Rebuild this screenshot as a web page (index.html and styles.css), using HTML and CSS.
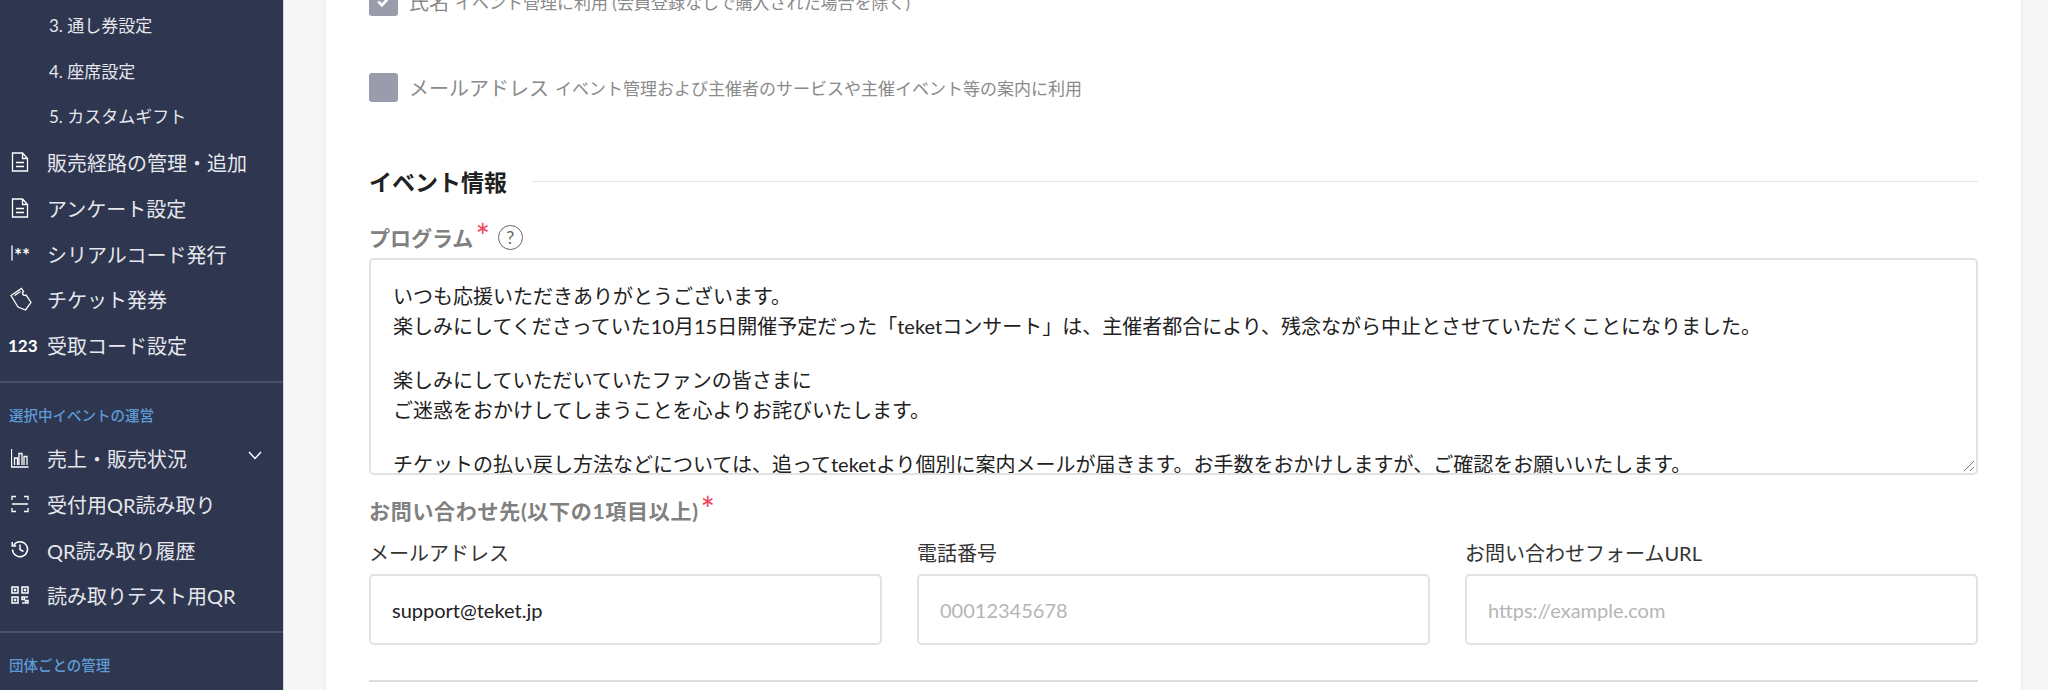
FILE: index.html
```html
<!DOCTYPE html>
<html lang="ja">
<head>
    <meta charset="UTF-8">
    <title>イベント編集</title>
    <link rel="stylesheet" href="styles.css">
</head>
<body>
    <div class="layout">
        <nav class="sidebar">
            <ul class="subnav">
                <li>3. 通し券設定</li>
                <li>4. 座席設定</li>
                <li>5. カスタムギフト</li>
            </ul>
            <ul class="nav">
                <li>
                    <svg class="icon" viewBox="0 0 18 20"><path d="M1.500 1h10l5 5.500V19h-15zM11.500 1v5.500h5M5 10.500h8M5 14.500h8"/></svg>
                    販売経路の管理・追加
                </li>
                <li>
                    <svg class="icon" viewBox="0 0 18 20"><path d="M1.500 1h10l5 5.500V19h-15zM11.500 1v5.500h5M5 10.500h8M5 14.500h8"/></svg>
                    アンケート設定
                </li>
                <li>
                    <svg class="icon" viewBox="0 0 18 20"><path d="M1 2.500v15"/></svg>
                    <span class="icon-text serial">**</span>
                    シリアルコード発行
                </li>
                <li>
                    <svg class="icon ticket" viewBox="0 0 22 24"><path d="M1 8.500L11.500 1.500l2 3a2 2 0 0 0 2.500 3.500l5 7.500-5.500 7.500L8 20z" transform="translate(0 0)"/><path d="M4.500 8.500l6-4"/></svg>
                    チケット発券
                </li>
                <li>
                    <span class="icon-text">123</span>
                    受取コード設定
                </li>
            </ul>
            <div class="nav-section">
                <h4>選択中イベントの運営</h4>
                <ul class="nav">
                    <li>
                        <svg class="icon" viewBox="0 0 18 20"><path d="M.5 1v18h17M3.500 17V10h3v7M8 17V5.500h3V17M13 17V8.500h3V17"/></svg>
                        売上・販売状況
                        <svg class="chevron" viewBox="0 0 14 9"><path d="M1 1l6 6.500L13 1"/></svg>
                    </li>
                    <li>
                        <svg class="icon" viewBox="0 0 18 18"><path d="M1 5V1.500h4M13 1.500h4V5M1 13v3.500h4M13 16.500h4V13M1 9h16"/></svg>
                        受付用QR読み取り
                    </li>
                    <li>
                        <svg class="icon" viewBox="0 0 18 18"><path d="M2.800 5A7.500 7.500 0 1 1 1.500 9.500M1.200 2v4h4M9 4.500v5l3.500 2" stroke-width="1.500"/></svg>
                        QR読み取り履歴
                    </li>
                    <li>
                        <svg class="icon" viewBox="0 0 18 18"><path d="M1 1h6v6H1zM11 1h6v6h-6zM1 11h6v6H1zM3.500 3.500h1v1h-1zM13.500 3.500h1v1h-1zM3.500 13.500h1v1h-1zM11 11h2.500v2.500H11zM14.500 14.500H17V17h-2.500zM14.500 11H17M11 17h2.500" stroke-width="1.500"/></svg>
                        読み取りテスト用QR
                    </li>
                </ul>
            </div>
            <div class="nav-section">
                <h4>団体ごとの管理</h4>
            </div>
        </nav>

        <main class="content">
            <div class="card">
                <div class="check-row first">
                    <span class="checkbox"><svg viewBox="0 0 16 16"><path d="M3 8l3.500 3.500L13 4.500"/></svg></span>
                    <span class="check-name">氏名</span>
                    <span class="check-note">イベント管理に利用 (会員登録なしで購入された場合を除く)</span>
                </div>
                <div class="check-row">
                    <span class="checkbox"></span>
                    <span class="check-name">メールアドレス</span>
                    <span class="check-note">イベント管理および主催者のサービスや主催イベント等の案内に利用</span>
                </div>

                <div class="section-title">
                    <h3>イベント情報</h3>
                    <span class="section-line"></span>
                </div>

                <div class="field-label">
                    プログラム<span class="required">*</span>
                    <span class="help">?</span>
                </div>
                <div class="textarea">
                    <p>いつも応援いただきありがとうございます。<br>楽しみにしてくださっていた10月15日開催予定だった「teketコンサート」は、主催者都合により、残念ながら中止とさせていただくことになりました。</p>
                    <p>楽しみにしていただいていたファンの皆さまに<br>ご迷惑をおかけしてしまうことを心よりお詫びいたします。</p>
                    <p>チケットの払い戻し方法などについては、追ってteketより個別に案内メールが届きます。お手数をおかけしますが、ご確認をお願いいたします。</p>
                    <svg class="resize" viewBox="0 0 12 12"><path d="M1 11L11 1M7 11l4-4"/></svg>
                </div>

                <div class="field-label contact">
                    お問い合わせ先(以下の1項目以上)<span class="required">*</span>
                </div>
                <div class="contact-grid">
                    <label class="contact-item">
                        <span>メールアドレス</span>
                        <input type="text" value="support@teket.jp">
                    </label>
                    <label class="contact-item">
                        <span>電話番号</span>
                        <input type="text" placeholder="00012345678">
                    </label>
                    <label class="contact-item">
                        <span>お問い合わせフォームURL</span>
                        <input type="text" placeholder="https://example.com">
                    </label>
                </div>
                <hr class="bottom-rule">
            </div>
        </main>
    </div>
</body>
</html>
```

FILE: styles.css
```css
* {
    box-sizing: border-box;
}
html, body {
    margin: 0;
    height: 690px;
    overflow: hidden;
}
body {
    background-color: #f7f7f8;
    font-family: Lato, "Noto Sans CJK JP", sans-serif;
    color: #212121;
}
ul {
    list-style: none;
    margin: 0;
    padding: 0;
}
.layout {
    display: flex;
    height: 690px;
}

/* sidebar */
.sidebar {
    width: 284px;
    flex-shrink: 0;
    height: 690px;
    overflow: hidden;
    background-color: #2e3650;
    border-right: 1px solid #d8d8dc;
    color: #e6e7ec;
}
.subnav {
    padding-top: 3px;
}
.subnav li {
    height: 45.7px;
    line-height: 45.7px;
    padding-left: 49px;
    font-size: 17px;
}
.nav li {
    display: flex;
    align-items: center;
    position: relative;
    height: 45.7px;
    font-size: 20px;
    padding-left: 47px;
}
.icon {
    position: absolute;
    left: 11px;
    top: 12px;
    width: 18px;
    height: 20px;
    fill: none;
    stroke: #fff;
    stroke-width: 1.3;
}
.icon.ticket {
    left: 10px;
    top: 10px;
    width: 22px;
    height: 24px;
}
.icon-text {
    position: absolute;
    left: 8px;
    font-size: 17px;
    font-weight: 700;
    color: #fff;
}
.serial {
    left: 14px;
    font-size: 19px;
    line-height: 20px;
    top: 14px;
}
.chevron {
    position: absolute;
    left: 248px;
    top: 15px;
    width: 14px;
    height: 9px;
    fill: none;
    stroke: #fff;
    stroke-width: 1.5;
}
.nav-section {
    border-top: 2px solid #4a5169;
    margin-top: 12px;
}
.nav-section h4 {
    margin: 0;
    padding: 23px 0 0 9px;
    height: 53.5px;
    font-size: 14.5px;
    line-height: 20px;
    font-weight: 500;
    color: #5f9bd5;
}

/* main */
.content {
    flex: 1;
    height: 690px;
    overflow: hidden;
    padding: 0 27px 0 42px;
}
.card {
    display: flow-root;
    background-color: #fff;
    height: 690px;
    padding: 0 43px;
    box-shadow: 0 0 6px rgba(0, 0, 0, 0.08);
}
.check-row {
    display: flex;
    align-items: center;
    height: 29px;
    margin-top: 57px;
    color: #8a8a8a;
}
.check-row.first {
    margin-top: -13px;
}
.checkbox {
    width: 29px;
    height: 29px;
    border-radius: 3px;
    background-color: #9a9cac;
    margin-right: 11px;
    flex-shrink: 0;
}
.checkbox svg {
    display: block;
    width: 29px;
    height: 29px;
    padding: 6px;
    fill: none;
    stroke: #fff;
    stroke-width: 2.5;
}
.check-name {
    font-size: 20px;
    margin-right: 6px;
}
.check-note {
    font-size: 17px;
}
.section-title {
    display: flex;
    align-items: center;
    margin-top: 64px;
    height: 30px;
}
.section-title h3 {
    margin: 0 25px 0 0;
    font-size: 23px;
    font-weight: 700;
}
.section-line {
    flex: 1;
    height: 1px;
    background-color: #e6e6e6;
}
.field-label {
    display: flex;
    align-items: center;
    margin-top: 26px;
    height: 30px;
    font-size: 21px;
    font-weight: 700;
    color: #808080;
}
.required {
    color: #f0405a;
    font-size: 34px;
    font-weight: 400;
    line-height: 20px;
    margin-top: -2px;
    margin-left: 2px;
}
.help {
    width: 25px;
    height: 25px;
    margin-left: 8px;
    border: 1.5px solid #666;
    border-radius: 50%;
    color: #666;
    font-size: 18px;
    font-weight: 400;
    line-height: 22px;
    text-align: center;
}
.textarea {
    position: relative;
    height: 217px;
    margin-top: 6px;
    padding: 21px 22px 0;
    overflow: hidden;
    border: 2px solid #e2e2e4;
    border-radius: 5px;
    font-size: 20px;
    line-height: 30px;
}
.textarea p {
    margin: 0 0 24px;
    white-space: nowrap;
}
.resize {
    position: absolute;
    right: 1px;
    bottom: 1px;
    width: 12px;
    height: 12px;
    fill: none;
    stroke: #777;
    stroke-width: 1;
}
.field-label.contact {
    margin-top: 20px;
    letter-spacing: 0.7px;
}
.contact-grid {
    display: grid;
    grid-template-columns: repeat(3, 1fr);
    gap: 35px;
    margin-top: 13px;
}
.contact-item span {
    display: block;
    height: 30px;
    line-height: 30px;
    font-size: 20px;
    color: #333;
    margin-bottom: 6px;
}
.contact-item input {
    display: block;
    width: 100%;
    height: 71px;
    padding: 0 21px;
    border: 2px solid #e2e2e4;
    border-radius: 5px;
    font-family: inherit;
    font-size: 20px;
    color: #212121;
}
.contact-item input::placeholder {
    color: #b5b5b5;
}
.bottom-rule {
    margin: 35px 0 0;
    border: 0;
    height: 2px;
    background-color: #dcdce0;
}
```
